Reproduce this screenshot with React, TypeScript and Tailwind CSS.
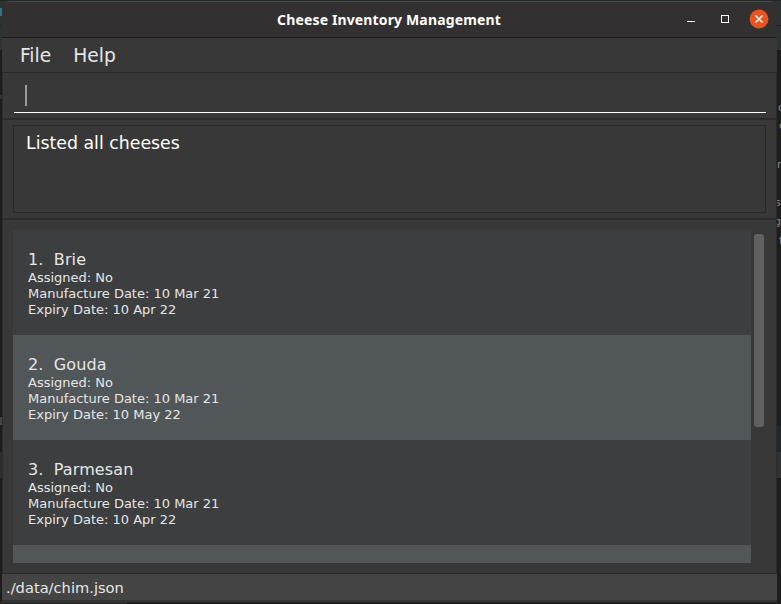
const cheeses = [
  { name: "Brie", expiry: "10 Apr 22" },
  { name: "Gouda", expiry: "10 May 22" },
  { name: "Parmesan", expiry: "10 Apr 22" },
];

function TitleBar() {
  return (
    <header className="flex h-[37px] shrink-0 items-start border-t border-b border-t-[#4b4a4a] border-b-[#1f1e1e] bg-[#333031]">
      <div className="w-[111px]" />
      <h1 className="mt-[9px] flex-1 pr-px text-center font-['Noto_Sans',sans-serif] text-[14px] leading-[18px] font-bold tracking-[0.14px] whitespace-nowrap text-white">
        Cheese Inventory Management
      </h1>
      <div className="mt-[7px] flex w-[111px] justify-end pr-2">
        <svg width="90" height="20" viewBox="0 0 90 20" fill="none">
          <path d="M8 12.5H16" stroke="white" />
          <rect x="42.5" y="6.5" width="7" height="7" stroke="white" />
          <circle cx="80" cy="10" r="9.4" fill="#e95420" />
          <path d="M76.5 6.5L83.5 13.5M83.5 6.5L76.5 13.5" stroke="white" strokeWidth="1.5" />
        </svg>
      </div>
    </header>
  );
}

function CheeseCard({ index, name, expiry }: { index: number; name: string; expiry: string }) {
  return (
    <li
      className={`h-[105px] shrink-0 pt-[20px] pl-[15px] text-[13px] leading-4 text-[#e6e6e6] ${
        index % 2 ? "bg-[#3c3e3f]" : "bg-[#515658]"
      }`}
    >
      <div className="h-5 text-base leading-5 tracking-[0.1px] whitespace-pre">{`${index}.  ${name}`}</div>
      <div>Assigned: No</div>
      <div>Manufacture Date: 10 Mar 21</div>
      <div>Expiry Date: {expiry}</div>
    </li>
  );
}

function Desktop() {
  return (
    <div className="absolute inset-0 bg-[#1d1d1d] text-[11px] leading-3 text-[#8a8a8a]">
      <div className="h-px bg-[#252829]" />
      <div className="h-[49px] bg-[#2d3233]" />
      <div className="absolute top-[8px] left-0 h-[8px] w-[2px] bg-[#28758c]" />
      <div className="absolute top-[25px] left-0 h-px w-full bg-[#202324]" />
      <div className="absolute top-[95px] left-0 h-[4px] w-[2px] bg-[#2d3440]" />
      <div className="absolute top-[417px] left-0 h-[8px] w-[2px] bg-[#444444]" />
      <div className="absolute top-[426px] right-0 h-[26px] w-1 bg-[#23262b]" />
      <div className="absolute top-[452px] right-0 h-[26px] w-1 bg-[#303232]" />
      <div className="absolute top-[452px] left-0 h-[26px] w-[2px] bg-[#2d2d2d]" />
      <div className="absolute top-[602px] left-0 h-[2px] w-[127px] bg-[#2b2b2b]" />
      <span className="absolute top-[102px] left-[774px]">l</span>
      <span className="absolute top-[102px] left-[778px]">c</span>
      <span className="absolute top-[120px] left-[779px]">c</span>
      <span className="absolute top-[159px] left-[777px]">r</span>
      <span className="absolute top-[197px] left-[775px]">s</span>
      <span className="absolute top-[216px] left-[774px]">g</span>
      <span className="absolute top-[235px] left-[779px]">f</span>
    </div>
  );
}

export default function App() {
  return (
    <div className="relative h-[604px] w-[781px] overflow-hidden pt-px pl-[2px] font-['DejaVu_Sans',sans-serif]">
      <Desktop />
      <main className="relative flex h-[601px] w-[775px] flex-col overflow-hidden rounded-t-lg bg-[#383838]">
        <TitleBar />
        <nav className="flex h-[35px] shrink-0 items-center gap-[22px] border-b border-[#2b2b2b] pt-[2px] pl-[18px] text-[18.67px] leading-6 text-[#e6e6e6]">
          <span>File</span>
          <span>Help</span>
        </nav>
        <section className="h-[47px] shrink-0 border-x border-b-2 border-[#2b2b2b] pr-[10px] pl-[11px]">
          <div className="flex h-10 items-center border-b border-white pt-[6px] pl-[11px]">
            <div className="h-[21px] w-[2px] bg-[#9b9b9b]" />
          </div>
        </section>
        <section className="h-[100px] shrink-0 border-x border-b-2 border-[#2b2b2b] pt-[5px] pr-[10px] pl-[10px]">
          <div className="h-[88px] border border-[#292929] pt-[6px] pl-[12px] text-[17.33px] leading-[22px] text-white">
            Listed all cheeses
          </div>
        </section>
        <section className="flex h-[353px] shrink-0 gap-[3px] border-x border-[#2b2b2b] pt-[10px] pl-[10px]">
          <ul className="flex h-[333px] w-[738px] flex-col overflow-hidden">
            {cheeses.map((cheese, i) => (
              <CheeseCard key={cheese.name} index={i + 1} name={cheese.name} expiry={cheese.expiry} />
            ))}
            <li className="h-[18px] bg-[#515658]" />
          </ul>
          <div className="mt-1 h-[193px] w-[10px] rounded-[3px] bg-[#606060]" />
        </section>
        <footer className="h-7 shrink-0 border-t border-b border-t-[#2b2b2b] border-b-[#303030] bg-[#444444] pt-[4px] pl-[4px] text-[14.67px] leading-5 text-[#e6e6e6]">
          ./data/chim.json
        </footer>
      </main>
    </div>
  );
}
